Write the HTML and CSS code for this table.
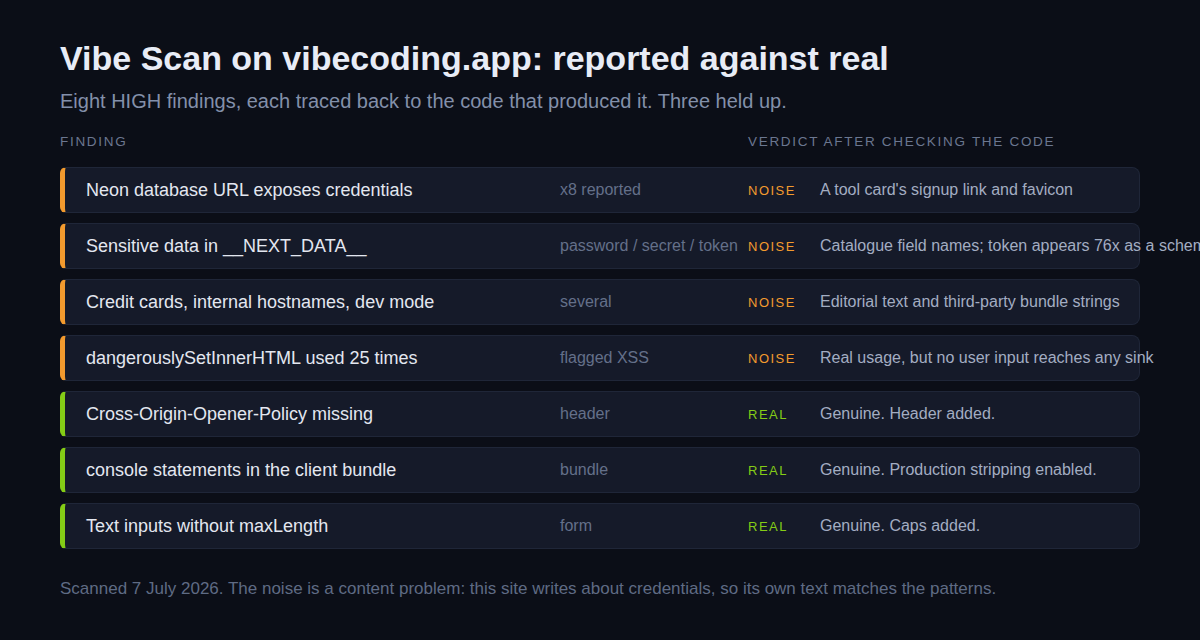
FILE: index.html
```html
<!DOCTYPE html>
<html lang="en">

<head>
    <meta charset="UTF-8">
    <meta name="viewport" content="width=device-width, initial-scale=1.0">
    <title>Vibe Scan</title>
    <link rel="stylesheet" href="styles.css">
</head>

<body>

    <div class="page">
        <h1>Vibe Scan on vibecoding.app: reported against real</h1>
        <p class="sub">Eight HIGH findings, each traced back to the code that produced it. Three held up.</p>

        <div class="heads">
            <span>Finding</span>
            <span>Verdict after checking the code</span>
        </div>

        <div class="rows">
            <div class="row noise">
                <span class="name">Neon database URL exposes credentials</span>
                <span class="detail">x8 reported</span>
                <span class="verdict">NOISE</span>
                <span class="reason">A tool card's signup link and favicon</span>
            </div>
            <div class="row noise">
                <span class="name">Sensitive data in __NEXT_DATA__</span>
                <span class="detail">password / secret / token</span>
                <span class="verdict">NOISE</span>
                <span class="reason">Catalogue field names; token appears 76x as a schema field</span>
            </div>
            <div class="row noise">
                <span class="name">Credit cards, internal hostnames, dev mode</span>
                <span class="detail">several</span>
                <span class="verdict">NOISE</span>
                <span class="reason">Editorial text and third-party bundle strings</span>
            </div>
            <div class="row noise">
                <span class="name">dangerouslySetInnerHTML used 25 times</span>
                <span class="detail">flagged XSS</span>
                <span class="verdict">NOISE</span>
                <span class="reason">Real usage, but no user input reaches any sink</span>
            </div>
            <div class="row real">
                <span class="name">Cross-Origin-Opener-Policy missing</span>
                <span class="detail">header</span>
                <span class="verdict">REAL</span>
                <span class="reason">Genuine. Header added.</span>
            </div>
            <div class="row real">
                <span class="name">console statements in the client bundle</span>
                <span class="detail">bundle</span>
                <span class="verdict">REAL</span>
                <span class="reason">Genuine. Production stripping enabled.</span>
            </div>
            <div class="row real">
                <span class="name">Text inputs without maxLength</span>
                <span class="detail">form</span>
                <span class="verdict">REAL</span>
                <span class="reason">Genuine. Caps added.</span>
            </div>
        </div>

        <p class="foot">Scanned 7 July 2026. The noise is a content problem: this site writes about credentials, so its own text matches the patterns.</p>
    </div>

</body>

</html>
```

FILE: styles.css
```css
html,
body {
    margin: 0;
    padding: 0;
    background: #0b0e17;
    overflow: hidden;
}

body {
    font-family: "Liberation Sans", Arial, sans-serif;
    width: 1200px;
    height: 640px;
}

.page {
    padding: 38px 60px 0 60px;
}

h1 {
    margin: 0;
    font-size: 34px;
    line-height: 40px;
    font-weight: bold;
    color: #e8ecf6;
}

.sub {
    margin: 11px 0 0 0;
    font-size: 20px;
    line-height: 24px;
    color: #8390aa;
}

/* column headings */
.heads {
    display: grid;
    grid-template-columns: 688px auto;
    margin-top: 21px;
    font-size: 13.5px;
    line-height: 16px;
    letter-spacing: 1.7px;
    text-transform: uppercase;
    color: #6b7790;
}

.rows {
    display: flex;
    flex-direction: column;
    gap: 10px;
    margin-top: 17px;
    width: 1080px;
}

.row {
    display: grid;
    grid-template-columns: 474px 188px 72px auto;
    align-items: center;
    height: 44px;
    padding-left: 21px;
    background: #151a29;
    border: 1px solid #1f2638;
    border-left: 5px solid #f29a2e;
    border-radius: 6px 8px 8px 6px;
    white-space: nowrap;
}

.row.real {
    border-left-color: #84cc16;
}

.name {
    font-size: 18px;
    color: #e3e7f0;
}

.detail {
    font-size: 16px;
    color: #647089;
}

.verdict {
    font-size: 13px;
    letter-spacing: 1.5px;
    color: #f29a2e;
}

.real .verdict {
    color: #84cc16;
}

.reason {
    font-size: 16px;
    color: #a3adc2;
}

.foot {
    margin: 30px 0 0 0;
    font-size: 17px;
    line-height: 20px;
    color: #5f6b84;
}
```
